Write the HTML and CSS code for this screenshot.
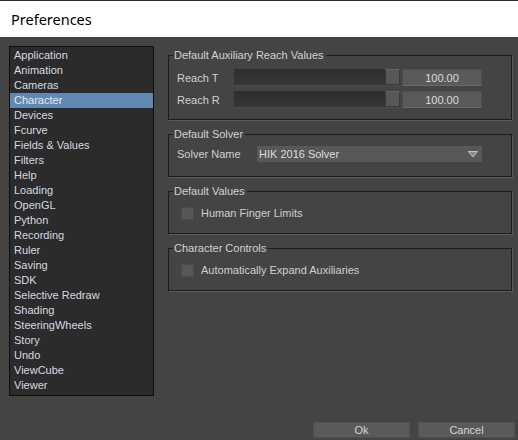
FILE: index.html
```html
<!DOCTYPE html>
<html lang="en">
<head>
    <meta charset="UTF-8" />
    <title>Preferences</title>
    <link rel="stylesheet" href="styles.css">
</head>
<body>
    <div class="window">
        <div class="titlebar">Preferences</div>

        <div class="body">
            <div class="content">
                <ul class="categories">
                    <li>Application</li>
                    <li>Animation</li>
                    <li>Cameras</li>
                    <li class="selected">Character</li>
                    <li>Devices</li>
                    <li>Fcurve</li>
                    <li>Fields &amp; Values</li>
                    <li>Filters</li>
                    <li>Help</li>
                    <li>Loading</li>
                    <li>OpenGL</li>
                    <li>Python</li>
                    <li>Recording</li>
                    <li>Ruler</li>
                    <li>Saving</li>
                    <li>SDK</li>
                    <li>Selective Redraw</li>
                    <li>Shading</li>
                    <li>SteeringWheels</li>
                    <li>Story</li>
                    <li>Undo</li>
                    <li>ViewCube</li>
                    <li>Viewer</li>
                </ul>

                <div class="groups">
                    <fieldset class="group reach">
                        <legend>Default Auxiliary Reach Values</legend>
                        <div class="row">
                            <label>Reach T</label>
                            <div class="slider"><span class="handle"></span></div>
                            <div class="value">100.00</div>
                        </div>
                        <div class="row">
                            <label>Reach R</label>
                            <div class="slider"><span class="handle"></span></div>
                            <div class="value">100.00</div>
                        </div>
                    </fieldset>

                    <fieldset class="group solver">
                        <legend>Default Solver</legend>
                        <div class="row">
                            <label class="wide">Solver Name</label>
                            <div class="combo">
                                <span>HIK 2016 Solver</span>
                                <svg width="10" height="7" viewBox="0 0 10 7"><polygon points="0.5,0.5 9.5,0.5 5,6" fill="#8a8a8a" stroke="#c4c4c4" stroke-width="1"/></svg>
                            </div>
                        </div>
                    </fieldset>

                    <fieldset class="group check">
                        <legend>Default Values</legend>
                        <div class="row">
                            <span class="box"></span>
                            <label>Human Finger Limits</label>
                        </div>
                    </fieldset>

                    <fieldset class="group check">
                        <legend>Character Controls</legend>
                        <div class="row">
                            <span class="box"></span>
                            <label>Automatically Expand Auxiliaries</label>
                        </div>
                    </fieldset>
                </div>
            </div>

            <div class="buttons">
                <button>Ok</button>
                <button>Cancel</button>
            </div>
        </div>
    </div>
</body>
</html>
```

FILE: styles.css
```css
html, body {
    margin: 0;
    padding: 0;
}
body {
    width: 518px;
    height: 440px;
    overflow: hidden;
    font-family: "Liberation Sans", Arial, sans-serif;
    font-size: 11px;
    color: #d2d6da;
    background-color: #444;
}
.window {
    display: flex;
    flex-direction: column;
    height: 440px;
}
.titlebar {
    height: 36px;
    border-top: 1px solid #2b2b2b;
    background-color: #fff;
    color: #000;
    font-family: "Noto Sans", sans-serif;
    font-size: 14.5px;
    line-height: 36px;
    padding-left: 11px;
}
.body {
    flex: 1;
    display: flex;
    flex-direction: column;
    background-color: #444;
    padding: 9px 6px 0 9px;
}
.content {
    display: flex;
    align-items: flex-start;
}
.categories {
    list-style: none;
    margin: 0 14px 0 0;
    padding: 1px 0 2px 0;
    width: 143px;
    height: 345px;
    border: 1px solid #0e0e0e;
    background-color: #2b2b2b;
}
.categories li {
    height: 15px;
    line-height: 15px;
    padding-left: 4px;
    color: #d3dae2;
}
.categories li.selected {
    background-color: #6088b0;
    color: #e4e8ee;
}
.groups {
    flex: 1;
    display: flex;
    flex-direction: column;
    gap: 7px;
    margin-top: 2px;
}
.group {
    margin: 0;
    padding: 0 10px 0 8px;
    border: 1px solid #1c1c1c;
    box-shadow: 1px 1px 0 #5c5c5c;
    min-width: 0;
}
.group legend {
    margin-left: -4px;
    padding: 0 2px 0 1px;
    height: 14px;
    line-height: 14px;
    color: #d0d2d4;
}
.row {
    display: flex;
    align-items: center;
}
.row label {
    width: 57px;
    color: #d0d0ce;
}
.reach {
    padding-top: 7px;
    padding-bottom: 11px;
}
.reach .row {
    height: 17px;
}
.reach .row + .row {
    margin-top: 5px;
}
.slider {
    width: 166px;
    height: 17px;
    box-sizing: border-box;
    display: flex;
    justify-content: flex-end;
    background: linear-gradient(#2e2e2e, #363636);
    border-bottom: 1px solid #4a4a4a;
}
.handle {
    width: 15px;
    height: 16px;
    box-sizing: border-box;
    background-color: #575757;
    border: 1px solid #3a3a3a;
    border-top-color: #666;
}
.value {
    margin-left: 2px;
    width: 80px;
    height: 17px;
    box-sizing: border-box;
    line-height: 16px;
    text-align: center;
    background-color: #5a5a5a;
    border: 1px solid #4e4e4e;
    border-bottom-color: #6a6a6a;
    color: #dcdcdc;
}
.solver {
    padding-top: 5px;
    padding-bottom: 14px;
}
.row label.wide {
    width: 80px;
}
.combo {
    width: 225px;
    height: 16px;
    display: flex;
    align-items: center;
    justify-content: space-between;
    padding: 0 4px 0 2px;
    box-sizing: border-box;
    background-color: #585858;
    color: #dcdcdc;
}
.combo svg {
    margin-top: 1px;
}
.check {
    padding-top: 7px;
    padding-bottom: 12px;
}
.check .row {
    height: 16px;
    padding-left: 4px;
}
.box {
    width: 13px;
    height: 13px;
    box-sizing: border-box;
    background-color: #575757;
    border: 1px solid #4a4a4a;
    margin-right: 7px;
}
.check .row label {
    width: auto;
}
.buttons {
    margin-top: auto;
    margin-right: -3px;
    display: flex;
    justify-content: flex-end;
    gap: 8px;
    padding: 0 0 2px 0;
}
.buttons button {
    width: 97px;
    height: 16px;
    padding: 0;
    font-family: "Liberation Sans", Arial, sans-serif;
    font-size: 11px;
    color: #d4d4d4;
    background-color: #5a5a5a;
    border: 1px solid #505050;
    border-radius: 0;
}
```
